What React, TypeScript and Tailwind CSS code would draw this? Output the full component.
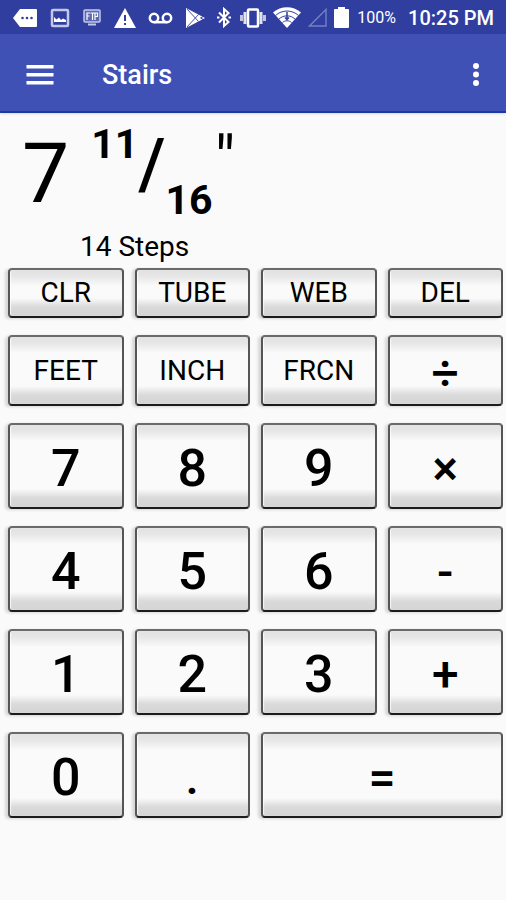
import { clsx } from 'clsx'

type Key = { label: string; name?: string; className?: string }

const wordKeys: Key[] = [
  { label: 'CLR' },
  { label: 'TUBE' },
  { label: 'WEB' },
  { label: 'DEL' },
]

const unitKeys: Key[] = [
  { label: 'FEET' },
  { label: 'INCH' },
  { label: 'FRCN' },
  { label: '÷', name: 'divide', className: 'pt-1.5 text-[48px] font-medium' },
]

const numberKeys: Key[] = [
  { label: '7' },
  { label: '8' },
  { label: '9' },
  { label: '×', name: 'multiply', className: 'text-[48px]' },
  { label: '4' },
  { label: '5' },
  { label: '6' },
  { label: '-', name: 'subtract', className: 'text-[48px]' },
  { label: '1' },
  { label: '2' },
  { label: '3' },
  { label: '+', name: 'add', className: 'text-[48px]' },
  { label: '0' },
  { label: '.', name: 'decimal point', className: 'text-[48px]' },
  { label: '=', name: 'equals', className: 'col-span-2 text-[48px]' },
]

function CalcKey({ label, name, className }: Key) {
  return (
    <button
      type="button"
      aria-label={name}
      className={clsx(
        'flex items-center justify-center rounded border-2 border-x-[#555] border-t-[#6a6a6a] border-b-[#1c1c1c] leading-none',
        'bg-[linear-gradient(to_bottom,#e2e2e2,#e6e6e6_6px,#fafafa_16px,#fafafa_calc(100%-18px),#dadada_calc(100%-9px),#d4d4d4)]',
        'shadow-[-3px_1px_3px_rgba(0,0,0,0.14),inset_1px_0_1px_rgba(255,255,255,0.8)]',
        className,
      )}
    >
      {label}
    </button>
  )
}

function StatusBar() {
  return (
    <div className="flex h-[34px] items-center bg-[#303f9f] pt-px pr-3 pl-[13px] text-white">
      <div className="flex items-center gap-3">
        {/* message */}
        <svg width="25" height="20" viewBox="0 0 25 20" fill="currentColor" aria-hidden="true">
          <path d="M7 1h16a1 1 0 0 1 1 1v16a1 1 0 0 1-1 1H7L0 10z" />
          <g fill="#303f9f">
            <circle cx="9.500" cy="10" r="1.300" />
            <circle cx="14" cy="10" r="1.300" />
            <circle cx="18.500" cy="10" r="1.300" />
          </g>
        </svg>
        {/* picture */}
        <svg width="20" height="20" viewBox="0 0 20 20" fill="none" aria-hidden="true">
          <rect x="2" y="2" width="16" height="16" rx="1" stroke="#c3c8e8" strokeWidth="2.500" />
          <path d="M4 14V9l2.500 2.500L9 9.500l2 2.500 2-1.500 3 1.500v2z" fill="#fff" />
        </svg>
        {/* ftp server */}
        <svg width="20" height="18" viewBox="-1 0 20 18" fill="none" aria-hidden="true">
          <rect x="1" y="1" width="16" height="12" rx="1" fill="#5c68b5" stroke="#c3c8e8" strokeWidth="1.500" />
          <path d="M4 11V4h3M4 7h2.500M7.500 4h4M9.500 4v7M12 11V4h2.500v3.500H12" stroke="#fff" strokeWidth="1.200" />
          <path d="M5 15.500h8" stroke="#c3c8e8" strokeWidth="2" />
        </svg>
        {/* warning */}
        <svg width="22" height="20" viewBox="0 0 22 20" fill="currentColor" aria-hidden="true">
          <path d="M11 0l11 20H0z" />
          <path d="M10 7h2v6h-2zM10 15h2v2h-2z" fill="#303f9f" />
        </svg>
        {/* voicemail */}
        <svg width="25" height="12" viewBox="0 0 25 12" fill="none" stroke="currentColor" strokeWidth="2.500" aria-hidden="true">
          <circle cx="6" cy="6" r="4.200" />
          <circle cx="19" cy="6" r="4.200" />
          <path d="M6 10.200h13" />
        </svg>
        {/* play store */}
        <svg width="20" height="20" viewBox="0 0 20 20" fill="currentColor" aria-hidden="true">
          <path d="M1 0l19 10L1 20z" />
          <path d="M2 1l11.500 12.500M2 19L13.500 6.500M15.500 10l3-1.500M15.500 10l3 1.500" stroke="#303f9f" strokeWidth="0.900" />
        </svg>
        {/* bluetooth */}
        <svg width="14" height="21" viewBox="0 0 14 21" fill="none" stroke="currentColor" strokeWidth="2" aria-hidden="true">
          <path d="M2 5.500l9.500 9.500L7 19V2l4.500 4L2 15.500" />
          <path d="M0 10.500h2.500M11.500 10.500H14" />
        </svg>
      </div>
      <div className="flex flex-1 items-center justify-between pr-2 pl-[9px]">
        {/* vibrate */}
        <svg width="26" height="20" viewBox="0 0 26 20" fill="none" stroke="currentColor" aria-hidden="true">
          <rect x="8" y="1.500" width="10" height="17" rx="1" strokeWidth="2.500" />
          <path d="M5 4v12M21 4v12" strokeWidth="3" opacity="0.85" />
          <path d="M1.500 7v6M24.500 7v6" strokeWidth="3" opacity="0.7" />
        </svg>
        {/* wifi */}
        <svg width="28" height="21" viewBox="0 0 28 21" fill="none" aria-hidden="true">
          <path d="M0 5.500C8-1.500 20-1.500 28 5.500L14 21z" fill="#fff" />
          <path d="M2.500 8.500c6.500-6 16.500-6 23 0M6 12c4.500-4.200 11.500-4.200 16 0M9.500 15.500c2.500-2.300 6.500-2.300 9 0" stroke="#303f9f" strokeWidth="1" />
          <path d="M14 5v7M12 10.500l2 2 2-2" stroke="#303f9f" strokeWidth="1.500" />
        </svg>
        {/* no signal */}
        <svg width="19" height="19" viewBox="0 0 19 19" fill="none" stroke="#7480c4" strokeWidth="1.400" aria-hidden="true">
          <path d="M18 1.500V18H1.500z" />
        </svg>
        {/* battery */}
        <svg width="15" height="21" viewBox="0 0 15 21" fill="currentColor" aria-hidden="true">
          <path d="M4 0h7v2h3a1 1 0 0 1 1 1v17a1 1 0 0 1-1 1H1a1 1 0 0 1-1-1V3a1 1 0 0 1 1-1h3z" />
        </svg>
      </div>
      <span className="text-base">100%</span>
      <span className="ml-3 text-[20px] font-medium">10:25 PM</span>
    </div>
  )
}

export default function App() {
  return (
    <div className="min-h-screen bg-[#fafafa] font-[Roboto,sans-serif] text-black">
      <StatusBar />
      <header className="flex h-[79px] items-center border-b-2 border-[#1c3aa4] bg-[#3f51b5] px-6 pt-1 text-white shadow">
        <button type="button" aria-label="Open menu">
          <svg width="32" height="24" viewBox="0 0 32 24" fill="currentColor">
            <path d="M2.500 2h27v3.500h-27zM2.500 10h27v3.500h-27zM2.500 18h27v3.500h-27z" />
          </svg>
        </button>
        <h1 className="ml-[46px] flex-1 text-[27px] leading-8 font-medium">Stairs</h1>
        <button type="button" aria-label="More options">
          <svg width="12" height="28" viewBox="0 0 12 28" fill="currentColor">
            <circle cx="6" cy="5" r="3" />
            <circle cx="6" cy="13.500" r="3" />
            <circle cx="6" cy="22" r="3" />
          </svg>
        </button>
      </header>
      <main>
        <output className="block h-[155px] px-[22px]">
          <span className="flex h-[120px] items-start leading-none">
            <span className="mt-[19px] text-[84px]">7</span>
            <span className="mt-[11px] ml-[22px] text-[41px] font-bold">11</span>
            <span className="mt-4 text-[70px] font-medium">/</span>
            <span className="mt-[67px] text-[41px] font-bold">16</span>
            <span className="mt-4 ml-0.5 text-[64px]">"</span>
          </span>
          <span className="block pl-[58px] text-[28px] leading-7">14 Steps</span>
        </output>
        <div className="grid gap-y-[17px] pr-[3px] pl-2">
          <div className="grid h-[50px] grid-cols-4 gap-x-[11px] text-[28px]">
            {wordKeys.map((key) => <CalcKey key={key.label} {...key} />)}
          </div>
          <div className="grid h-[71px] grid-cols-4 gap-x-[11px] text-[28px]">
            {unitKeys.map((key) => <CalcKey key={key.label} {...key} />)}
          </div>
          <div className="grid auto-rows-[86px] grid-cols-4 gap-x-[11px] gap-y-[17px] text-[52px] font-medium *:pt-1.5">
            {numberKeys.map((key) => <CalcKey key={key.label} {...key} />)}
          </div>
        </div>
      </main>
    </div>
  )
}
